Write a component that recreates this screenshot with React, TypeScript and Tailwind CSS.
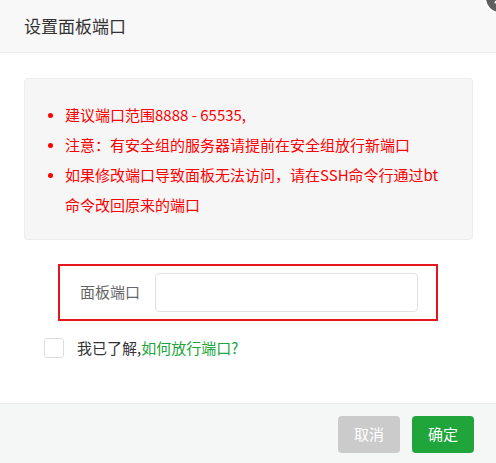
import React from "react";

const font = { fontFamily: '"Noto Sans CJK SC", "Noto Sans", sans-serif' };

function Bullet({ children }: { children: React.ReactNode }) {
  return (
    <li className="flex items-start leading-[30px]">
      <span className="w-[17px] shrink-0 flex items-center h-[30px]">
        <span className="block w-[5px] h-[5px] rounded-full bg-[#ff0000]" />
      </span>
      <span>{children}</span>
    </li>
  );
}

export default function App() {
  return (
    <div
      className="relative w-[496px] h-[463px] overflow-hidden bg-white flex flex-col"
      style={font}
    >
      {/* header */}
      <div className="h-[53px] shrink-0 bg-[#f8f8f8] border-b border-[#eeeeee] flex items-center pl-[24px]">
        <span className="text-[17px] text-[#333333]">设置面板端口</span>
      </div>

      {/* close button */}
      <div className="absolute top-[-18px] right-[-20px] w-[32px] h-[32px] rounded-full bg-[#5f5f5f] border-2 border-white flex items-center justify-center">
        <svg width="14" height="14" viewBox="0 0 16 16">
          <path d="M3 3 L13 13 M13 3 L3 13" stroke="#fff" strokeWidth="2.5" strokeLinecap="round" />
        </svg>
      </div>

      {/* body */}
      <div className="flex-1 flex flex-col">
        <div className="mt-[25px] ml-[24px] w-[449px] h-[162px] bg-[#f6f6f6] border border-[#ececec] rounded-[4px] pt-[21px] pl-[23px] pr-[26px]">
          <ul className="text-[15px] text-[#ff0000]">
            <Bullet>建议端口范围8888 - 65535,</Bullet>
            <Bullet>注意：有安全组的服务器请提前在安全组放行新端口</Bullet>
            <Bullet>如果修改端口导致面板无法访问，请在SSH命令行通过bt命令改回原来的端口</Bullet>
          </ul>
        </div>

        <div className="mt-[24px] ml-[58px] w-[380px] h-[57px] border-2 border-[#e5161c] flex items-center pl-[20px] pr-[17px]">
          <span className="w-[60px] text-[15px] text-[#666666] whitespace-nowrap">面板端口</span>
          <input
            className="ml-[15px] w-[263px] h-[39px] border border-[#e2e2e6] rounded-[4px] outline-none px-2 text-[15px]"
            type="text"
          />
        </div>

        <div className="mt-[16px] ml-[44px] flex items-center">
          <span className="w-[20px] h-[20px] border border-[#dddddd] rounded-[3px] bg-white" />
          <span className="ml-[13px] text-[15px] text-[#333333]">
            我已了解,<span className="text-[#20a53a]">如何放行端口?</span>
          </span>
        </div>
      </div>

      {/* footer */}
      <div className="h-[60px] shrink-0 bg-[#f5f6f6] border-t border-[#eaeaea] flex items-start justify-end pt-[12px] pr-[22px] gap-[12px]">
        <button className="w-[62px] h-[37px] rounded-[4px] bg-[#cbcbcb] text-white text-[15px]">取消</button>
        <button className="w-[62px] h-[37px] rounded-[4px] bg-[#20a53a] text-white text-[15px]">确定</button>
      </div>
    </div>
  );
}
